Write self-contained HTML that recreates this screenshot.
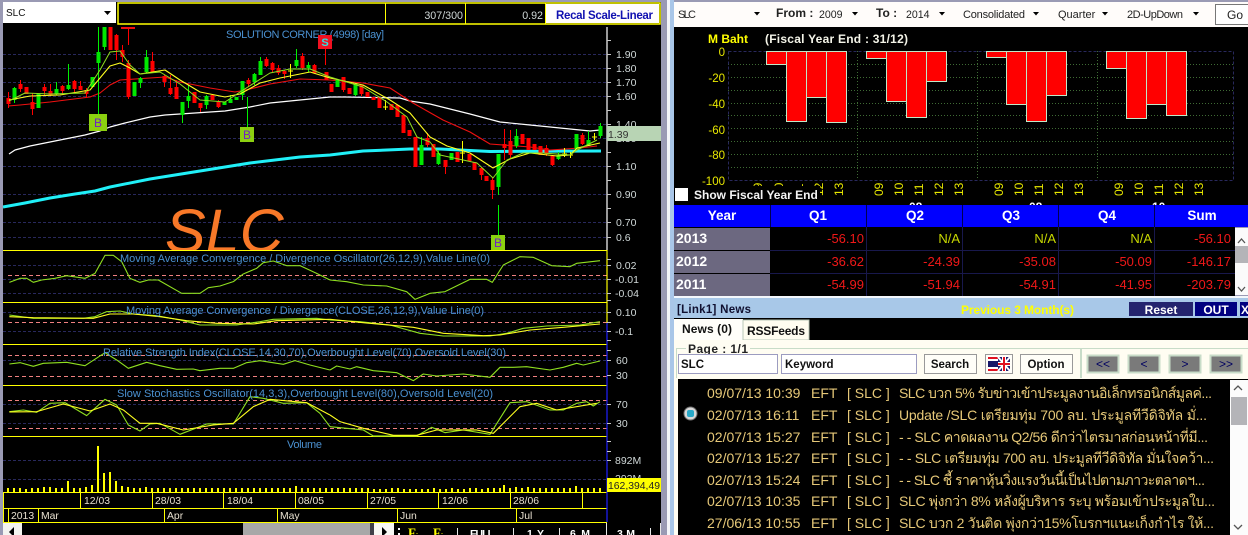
<!DOCTYPE html>
<html><head><meta charset="utf-8"><style>
html,body{margin:0;padding:0;background:#9a9ab4;width:1248px;height:535px;overflow:hidden}
svg{display:block;position:absolute;left:0;top:0}
text{font-family:"Liberation Sans","Noto Sans CJK SC",sans-serif;white-space:pre}
.sc{fill:#d0d8d8;font-size:10.5px}
.t{fill:#4a90d0;font-size:11px}
.d{fill:#e8e0d0;font-size:10.4px}
.ya{fill:#e8e800;font-size:11.5px;text-anchor:end}
.xa{fill:#e8e800;font-size:12px}
.th{fill:#fff;font-size:13.5px;font-weight:bold;text-anchor:middle}
.yr{fill:#fff;font-size:14px;font-weight:bold}
.ft{fill:#fff;font-size:10.500px;font-weight:bold}
.v{fill:#f01818;font-size:13px;text-anchor:end}
.na{fill:#c8d800;font-size:13px;text-anchor:end}
.n{fill:#e6c878;font-size:14px}
.tb{fill:#222;font-size:11px}
.nv{fill:#000060;font-size:12px;text-anchor:middle}
.m{fill:#fff;font-size:13px;font-weight:bold;text-anchor:middle}
</style></head><body>
<svg width="1248" height="535" viewBox="0 0 1248 535" xmlns="http://www.w3.org/2000/svg">
<defs><clipPath id="c1"><rect x="3" y="27" width="604" height="223"/></clipPath>
<clipPath id="c2"><rect x="673" y="183" width="575" height="22"/></clipPath></defs>
<!-- frame -->
<rect width="1248" height="535" fill="#9a9ab4"/>
<rect x="667" y="0" width="3" height="535" fill="#f4f6fa"/>
<rect x="670" y="0" width="4" height="535" fill="#a9c6e8"/>
<rect x="3" y="2" width="658" height="533" fill="#000"/>

<!-- left top bar -->
<rect x="3" y="2" width="113" height="21" fill="#fff"/>
<text x="6" y="16" style="font-size:10px" fill="#111">SLC</text>
<path d="M104 11h7l-3.500 4z" fill="#000"/>
<rect x="118" y="3" width="542" height="21" fill="#000" stroke="#ffff00" stroke-width="1.500"/>
<path d="M385.500 3V24M465.500 3V24M545.500 3V24" stroke="#ffff00"/>
<text x="463" y="19" text-anchor="end" style="font-size:10.700px" fill="#d0d8d8">307/300</text>
<text x="543" y="19" text-anchor="end" style="font-size:10.700px" fill="#d0d8d8">0.92</text>
<rect x="546" y="4" width="113" height="19" fill="#fffdfd"/>
<text x="556" y="19" style="font-size:11.500px;font-weight:bold" fill="#1010b0" textLength="97">Recal Scale-Linear</text>

<!-- main grid -->
<g stroke="#28285c" stroke-dasharray="3 2" shape-rendering="crispEdges">
<path d="M3 54.500H607M3 68.500H607M3 82.500H607M3 96.500H607M3 124.500H607M3 138.500H607M3 166.500H607M3 194.500H607M3 222.500H607M3 237.500H607"/>
<path d="M3 265.500H607M3 279.500H607M3 293.500H607M3 312.500H607M3 331.500H607M3 360.500H607M3 404.500H607M3 423.500H607M3 460.500H607M3 479.500H607"/>
</g>
<!-- SLC watermark -->
<g clip-path="url(#c1)"><text x="165" y="252" style="font-size:61px;font-style:italic" fill="#f87828">SLC</text></g>
<text x="226" y="38" class="t" textLength="158">SOLUTION CORNER (4998) [day]</text>

<!-- MAs -->
<g fill="none" stroke-linejoin="round">
<path d="M9 154L15 150L30 146L50 142L65 139L85 135L100 131L110 127L125 123L150 117L165 115L180 114L210 112L225 111L250 107L270 103L300 100L330 97L345 97L400 98L410 101L430 104L470 114L500 122L530 125L560 128L590 131L600 130" stroke="#fff" stroke-width="1.200"/>
<path d="M3 207L25 203L50 198L75 194L95 191L110 187L150 179L200 171L250 163L300 157L330 155L363 151L410 149L440 149L490 151.500L601 151" stroke="#20f0f8" stroke-width="3"/>
<path d="M8 106L20 105L50 102L90 97L100 93L110 85L120 80L150 78L165 77L180 82L210 88L235 92L250 89L270 84L300 79L330 80L363 83L390 88L413 103L443 120L470 132L490 144L530 147L550 150L580 148L597 146" stroke="#f01010" stroke-width="1.100"/>
</g>
<!-- wicks -->
<path fill="none" stroke="#ff0000" d="M8.500 92V108M20.500 80V92M32.500 93V115M44.500 84V95M50.500 84V96M62.500 85V94M74.500 80V92M80.500 81V90M86.500 88V98M116.500 34V60M122.500 45V62M128.500 28V45M128.500 60V99M152.500 52V72M164.500 75V87M170.500 75V95M176.500 80V99M200.500 103V112M218.500 100V108M248.500 78V87M266.500 57V67M272.500 62V72M278.500 65V75M284.500 70V79M302.500 53V70M314.500 64V73M325.500 49V65M343.500 77V92M361.500 85V96M427.500 133V147M445.500 160V174M481.500 167V180M492.500 178V199M504.500 129V160M510.500 130V158M546.500 145V156M552.500 155V166M582.500 133V145"/>
<path fill="none" stroke="#00f000" d="M14.500 87V103M56.500 82V95M68.500 64V90M98.500 27V114M104.500 27V50M140.500 77V88M146.500 50V73M182.500 102V123M188.500 85V108M206.500 95V109M230.500 95V103M242.500 81V100M247.500 97V127M254.500 73V85M260.500 57V75M296.500 49V68M308.500 62V72M355.500 84V96M421.500 137V165M438.500 150V165M498.500 154V195M498.500 205V235M516.500 129V148M558.500 152V160M588.500 131V146M600.500 123V138"/>
<!-- bodies -->
<path fill="none" stroke="#ff0000" stroke-width="4" d="M8.500 98V104M20.500 84V89M26.500 87V94M32.500 102V109M44.500 87V91M50.500 91V95M62.500 86V91M74.500 81V89M80.500 86V90M86.500 90V94M110.500 27V50M116.500 35V50M122.500 50V57M128.500 63V97M152.500 61V72M164.500 76V82M170.500 88V94M176.500 87V99M194.500 92V103M200.500 103V108M212.500 95V100M218.500 102V107M248.500 80V84M266.500 59V66M272.500 63V70M278.500 68V73M284.500 71V74M302.500 56V68M314.500 65V73M326.500 72V80M331.500 84V92M343.500 77V90M349.500 88V94M361.500 85V94M367.500 92V97M373.500 97V100M379.500 97V108M391.500 104V110M397.500 105V117M403.500 115V133M409.500 130V136M415.500 137V167M427.500 138V145M433.500 144V157M445.500 160V167M457.500 152V162M469.500 154V161M474.500 162V170M481.500 168V175M486.500 176V181M492.500 180V190M504.500 144V148M510.500 141V155M522.500 134V144M528.500 138V150M534.500 144V150M540.500 146V155M546.500 148V154M552.500 156V165M582.500 135V144"/>
<path fill="none" stroke="#00e800" stroke-width="4" d="M14.500 88V100M38.500 94V108M56.500 89V94M68.500 85V89M92.500 77V87M98.500 52V63M104.500 27V47M134.500 82V96M140.500 78V83M146.500 57V72M182.500 102V115M188.500 96V101M206.500 96V105M224.500 102V105M230.500 99V103M236.500 97V100M242.500 81V95M254.500 74V82M260.500 61V75M296.500 60V66M308.500 65V68M337.500 80V87M355.500 84V95M421.500 145V165M438.500 153V164M451.500 153V160M498.500 154V187M516.500 136V146M558.500 155V159M576.500 134V149M588.500 140V146M600.500 126V136"/>
<path fill="none" stroke="#ffff00" d="M290.500 64V78M288 71H293M385.500 100V110M383 107H388M462.500 141V163M460 153H465M564.500 148V157M562 154H567M570.500 152V158M568 155H573M594.500 133V140M592 137H597"/>
<path d="M121 28H135" stroke="#f01010" stroke-width="2"/>
<g fill="none" stroke-linejoin="round">
<path d="M9 100L30 96L60 95L90 90L100 78L110 66L120 63L130 68L140 74L165 70L180 80L200 92L225 97L240 94L260 83L280 78L310 72L330 78L363 85L390 100L410 113L430 137L447 146L470 153L493 168L510 159L530 153L557 156L570 155L577 148L600 143" stroke="#ffff20" stroke-width="1.100"/>
<path d="M9 101L25 93L50 94L85 93L100 70L110 52L120 51L130 65L140 74L160 72L180 84L200 100L225 102L240 92L270 73L290 69L310 69L330 77L363 87L387 102L407 117L417 137L430 142L440 155L463 160L477 163L493 178L507 160L523 153L543 153L570 155L577 150L597 140" stroke="#90e020" stroke-width="1"/>
</g>
<!-- markers -->
<rect x="89" y="114" width="18" height="17" fill="#8cd010"/><text x="98" y="127" text-anchor="middle" style="font-size:12px" fill="#7020c8">B</text>
<rect x="240" y="127" width="14" height="15" fill="#8cd010"/><text x="247" y="139" text-anchor="middle" style="font-size:12px" fill="#7020c8">B</text>
<rect x="491" y="235" width="14" height="15" fill="#8cd010"/><text x="498" y="247" text-anchor="middle" style="font-size:12px" fill="#7020c8">B</text>
<rect x="318" y="35" width="14" height="14" fill="#f01020"/><text x="325" y="46" text-anchor="middle" style="font-size:11px;font-weight:bold" fill="#30e0e0">S</text>

<!-- panel separators -->
<path d="M3 250.500H607M3 302.500H607M3 344.500H607M3 385.500H607M3 436.500H607" stroke="#ffff00" shape-rendering="crispEdges"/>
<g stroke="#f08080" stroke-dasharray="4 3" shape-rendering="crispEdges">
<path d="M8 275.500H607M8 322.500H607M8 355.500H607M8 376.500H607M8 400.500H607M8 428.500H607"/>
</g>
<!-- oscillator lines -->
<g transform="translate(0 250) scale(.3333)" fill="none" stroke-width="3.300" stroke-linejoin="round">
<path stroke="#90e020" d="M28 97L60 85L80 85L100 97L125 90L165 85L200 77L255 85L285 70L315 16L340 16L365 35L390 85L420 97L445 90L475 90L545 130L600 130L625 113L660 108L700 95L730 72L770 55L790 38L820 33L860 47L900 47L950 70L990 90"/>
<path stroke="#90e020" d="M28 195L100 205L250 205L285 200L320 185L360 183L400 192L470 197L540 210L600 225L710 225L780 215L820 208L950 205L990 210"/>
<path stroke="#ffff20" d="M28 200L100 203L280 205L330 192L400 192L480 200L560 212L650 220L760 222L830 212L990 208"/>
<path stroke="#90e020" d="M28 342L60 338L100 349L130 340L200 337L255 347L315 308L350 330L385 355L440 337L480 347L530 358L580 357L600 362L660 355L700 355L740 338L780 332L850 343L885 332L930 345L990 360"/>
<path stroke="#90e020" d="M28 485L70 480L110 487L150 460L195 458L260 497L315 448L350 465L385 525L420 543L450 522L480 520L540 553L620 522L700 522L750 440L790 445L850 460L920 458L960 490L990 530"/>
<path stroke="#ffff20" d="M28 486L110 485L190 462L270 483L330 462L370 480L420 520L470 520L550 540L640 525L700 520L760 470L810 448L920 458L990 495"/>
</g>
<g transform="translate(330 250) scale(.3333)" fill="none" stroke-width="3.300" stroke-linejoin="round">
<path stroke="#90e020" d="M0 90L50 95L100 105L170 108L230 125L255 148L300 130L345 125L420 88L470 88L487 97L520 45L570 20L610 22L665 47L720 50L740 40L810 32"/>
<path stroke="#90e020" d="M0 210L90 215L180 225L270 250L340 258L390 258L480 258L530 250L580 235L650 228L750 225L810 215"/>
<path stroke="#ffff20" d="M0 208L100 218L250 232L340 250L460 257L510 255L600 240L700 232L810 222"/>
<path stroke="#90e020" d="M0 360L20 348L60 357L80 350L130 362L200 368L250 392L280 372L320 378L400 372L480 382L510 352L550 352L590 350L660 360L700 352L740 340L760 345L810 333"/>
<path stroke="#90e020" d="M0 530L100 540L130 558L190 558L260 558L305 532L345 548L400 540L480 553L540 458L590 455L660 480L700 480L740 460L770 455L790 468L810 455"/>
<path stroke="#ffff20" d="M0 495L30 515L100 535L190 556L260 556L320 540L440 540L490 550L570 470L620 460L680 480L800 460"/>
</g>
<text x="120" y="262" class="t" textLength="370">Moving Average Convergence / Divergence Oscillator(26,12,9),Value Line(0)</text>
<text x="126" y="314" class="t" textLength="358">Moving Average Convergence / Divergence(CLOSE,26,12,9),Value Line(0)</text>
<text x="103" y="356" class="t" textLength="403">Relative Strength Index(CLOSE,14,30,70),Overbought Level(70),Oversold Level(30)</text>
<text x="117" y="397" class="t" textLength="376">Slow Stochastics Oscillator(14,3,3),Overbought Level(80),Oversold Level(20)</text>
<text x="287" y="448" class="t" textLength="35">Volume</text>

<!-- volume -->
<path stroke="#ffff00" stroke-width="2" fill="none" shape-rendering="crispEdges" d="M8 488V492M14 488V492M20 488V492M26 489V492M32 488V492M38 488V492M44 487V492M50 487V492M56 488V492M62 488V492M68 481V492M74 488V492M80 488V492M86 487V492M92 485V492M98 446V492M104 473V492M110 472V492M116 481V492M122 486V492M128 487V492M134 488V492M140 488V492M146 487V492M152 488V492M158 488V492M164 488V492M170 488V492M176 488V492M182 488V492M188 488V492M194 488V492M200 488V492M206 488V492M212 488V492M218 488V492M224 488V492M230 488V492M236 488V492M242 488V492M248 488V492M254 488V492M260 488V492M266 488V492M272 488V492M278 488V492M284 488V492M290 488V492M296 486V492M302 488V492M308 488V492M314 488V492M320 488V492M326 488V492M332 488V492M338 488V492M344 488V492M350 488V492M356 488V492M362 488V492M368 488V492M374 489V492M380 489V492M386 489V492M392 488V492M398 488V492M404 489V492M410 489V492M416 489V492M422 489V492M428 489V492M434 488V492M440 489V492M446 489V492M452 488V492M458 489V492M464 489V492M470 488V492M476 488V492M482 489V492M488 488V492M494 488V492M500 488V492M504 485V492M510 488V492M516 487V492M522 488V492M528 487V492M534 488V492M540 488V492M546 488V492M552 488V492M558 488V492M564 488V492M570 488V492M576 486V492M582 488V492M588 488V492M594 488V492M600 488V492"/>

<!-- date rows -->
<path d="M3 492.500H607M3 508.500H607M3 522.500H607" stroke="#ffff00" shape-rendering="crispEdges"/>
<path d="M80.500 492V508M152.500 492V508M223.500 492V508M295.500 492V508M367.500 492V508M438.500 492V508M510.500 492V508M582.500 492V508M8.500 508V522M38.500 508V522M164.500 508V522M277.500 508V522M397.500 508V522M516.500 508V522M3.500 492V522" stroke="#ffff00" shape-rendering="crispEdges"/>
<text x="84" y="504" class="d">12/03</text><text x="155" y="504" class="d">28/03</text><text x="227" y="504" class="d">18/04</text><text x="298" y="504" class="d">08/05</text><text x="370" y="504" class="d">27/05</text><text x="442" y="504" class="d">12/06</text><text x="513" y="504" class="d">28/06</text>
<text x="11" y="519" class="d">2013</text><text x="41" y="519" class="d">Mar</text><text x="167" y="519" class="d">Apr</text><text x="280" y="519" class="d">May</text><text x="400" y="519" class="d">Jun</text><text x="519" y="519" class="d">Jul</text>

<!-- scale -->
<path d="M607 27V250" stroke="#fff" stroke-width="1.200"/><path d="M607 250V323" stroke="#ffff00" stroke-width="1.200"/><path d="M607 323V522" stroke="#2020ff" stroke-width="1.200"/>
<path d="M607 40.500H611M607 54.500H611M607 68.500H611M607 82.500H611M607 96.500H611M607 110.500H611M607 124.500H611M607 138.500H611M607 152.500H611M607 166.500H611M607 180.500H611M607 194.500H611M607 208.500H611M607 222.500H611M607 237.500H611M607 259.500H611M607 265.500H611M607 279.500H611M607 293.500H611M607 300.500H611M607 312.500H611M607 322.500H611M607 331.500H611M607 340.500H611M607 350.500H611M607 360.500H611M607 375.500H611M607 404.500H611M607 423.500H611M607 441.500H611M607 451.500H611M607 460.500H611" stroke="#c8c8c8" shape-rendering="crispEdges"/>
<text class="sc" x="616" y="58">1.90</text><text class="sc" x="616" y="72">1.80</text><text class="sc" x="616" y="86">1.70</text><text class="sc" x="616" y="100">1.60</text><text class="sc" x="616" y="128">1.40</text><text class="sc" x="616" y="142">1.30</text><text class="sc" x="616" y="170">1.10</text><text class="sc" x="616" y="198">0.90</text><text class="sc" x="616" y="226">0.70</text><text class="sc" x="616" y="241">0.6</text>
<text class="sc" x="616" y="269">0.02</text><text class="sc" x="615" y="283">-0.01</text><text class="sc" x="615" y="297">-0.04</text><text class="sc" x="616" y="316">0.10</text><text class="sc" x="615" y="335">-0.1</text><text class="sc" x="616" y="364">60</text><text class="sc" x="616" y="379">30</text><text class="sc" x="616" y="408">70</text><text class="sc" x="616" y="427">30</text><text class="sc" x="615" y="464">892M</text><text class="sc" x="615" y="482">292M</text>
<rect x="607" y="126" width="54" height="15" fill="#b8d4b4"/><text x="608" y="138" style="font-size:10.500px" fill="#333">1.39</text>
<rect x="607" y="478" width="54" height="14" fill="#ffff00"/><text x="608" y="489" style="font-size:10.400px" fill="#222">162,394,49</text>

<!-- bottom scrollbar -->
<rect x="3" y="523" width="19" height="12" fill="#f4f4f0"/><path d="M14 527L9 532L14 537z" fill="#000"/>
<rect x="243" y="523" width="127" height="12" fill="#a8a8a8"/>
<rect x="370" y="523" width="4" height="12" fill="#404048"/>
<rect x="374" y="523" width="20" height="12" fill="#f8f8f4"/><path d="M382 527L387 532L382 537z" fill="#000"/>
<path d="M399 528V530M399 533V535" stroke="#fff" stroke-width="2"/>
<text x="408" y="537" style="font:bold 13px 'Liberation Serif',serif" fill="#ffff00">F</text><text x="416" y="535" style="font-size:6px" fill="#ffff00">-</text>
<text x="433" y="537" style="font:bold 13px 'Liberation Serif',serif" fill="#ffff00">F</text><text x="441" y="535" style="font-size:6px" fill="#ffff00">-</text>
<path d="M457.500 528V535M513.500 528V535M559.500 528V535M606.500 523V535M650.500 528V535M660.500 523V535" stroke="#e8e8e8" shape-rendering="crispEdges"/>
<text x="470" y="537" class="ft" textLength="24">FULL</text><text x="527" y="537" class="ft" textLength="17">1 Y</text><text x="570" y="537" class="ft" textLength="20">6 M</text><text x="617" y="537" class="ft" textLength="18">3 M</text>

<!-- RIGHT: toolbar -->
<rect x="674" y="2" width="574" height="25" fill="#fffcfa"/>
<text x="678" y="18" class="tb" textLength="18">SLC</text><text x="776" y="17" class="tb" style="font-weight:bold;font-size:12px">From :</text><text x="819" y="18" class="tb" style="font-size:10.600px">2009</text><text x="876" y="17" class="tb" style="font-weight:bold;font-size:12px">To :</text><text x="906" y="18" class="tb" style="font-size:10.600px">2014</text><text x="963" y="18" class="tb" textLength="62">Consolidated</text><text x="1058" y="18" class="tb">Quarter</text><text x="1127" y="18" class="tb" textLength="56">2D-UpDown</text>
<path d="M754 12h6l-3 3.500zM852 12h6l-3 3.500zM939 12h6l-3 3.500zM1033 12h6l-3 3.500zM1102 12h6l-3 3.500zM1193 12h6l-3 3.500z" fill="#000"/>
<rect x="1215.500" y="4.500" width="40" height="20" fill="#fff" stroke="#777"/><text x="1227" y="19" class="tb" style="font-size:12px">Go</text>

<!-- bar chart -->
<rect x="674" y="27" width="574" height="178" fill="#000"/>
<text x="708" y="43" style="font-size:12px;font-weight:bold" fill="#ffff00">M Baht</text>
<text x="765" y="43" style="font-size:12px;font-weight:bold" fill="#f4f4e8" textLength="143">(Fiscal Year End : 31/12)</text>
<g stroke="#3e6a34" stroke-dasharray="1 2" shape-rendering="crispEdges">
<path d="M728 64.500H1233M728 77.500H1233M728 90.500H1233M728 103.500H1233M728 115.500H1233M728 128.500H1233M728 141.500H1233M728 154.500H1233M728 167.500H1233M857.500 51V180M977.500 51V180M1097.500 51V180"/></g>
<rect x="728.500" y="51.500" width="505" height="129" fill="none" stroke="#28285c" stroke-dasharray="3 2"/>
<g fill="#ff0000" stroke="#c0e8c8" stroke-width="1" shape-rendering="crispEdges">
<rect x="766.500" y="51.500" width="20" height="13"/><rect x="786.500" y="51.500" width="20" height="70"/><rect x="806.500" y="51.500" width="20" height="46"/><rect x="826.500" y="51.500" width="20" height="71"/>
<rect x="866.500" y="51.500" width="20" height="7"/><rect x="886.500" y="51.500" width="20" height="50"/><rect x="906.500" y="51.500" width="20" height="66"/><rect x="926.500" y="51.500" width="20" height="30"/>
<rect x="986.500" y="51.500" width="20" height="6"/><rect x="1006.500" y="51.500" width="20" height="53"/><rect x="1026.500" y="51.500" width="20" height="70"/><rect x="1046.500" y="51.500" width="20" height="44"/>
<rect x="1106.500" y="51.500" width="20" height="17"/><rect x="1126.500" y="51.500" width="20" height="67"/><rect x="1146.500" y="51.500" width="20" height="53"/><rect x="1166.500" y="51.500" width="20" height="64"/>
</g>
<text class="ya" x="725" y="56">0</text><text class="ya" x="725" y="82">-20</text><text class="ya" x="725" y="108">-40</text><text class="ya" x="725" y="134">-60</text><text class="ya" x="725" y="159">-80</text><text class="ya" x="725" y="185">-100</text>
<g clip-path="url(#c2)">
<text class="xa" transform="translate(762 196) rotate(-90)">09</text><text class="xa" transform="translate(783 196) rotate(-90)">10</text><text class="xa" transform="translate(803 196) rotate(-90)">11</text><text class="xa" transform="translate(823 196) rotate(-90)">12</text><text class="xa" transform="translate(843 196) rotate(-90)">13</text>
<text class="xa" transform="translate(883 196) rotate(-90)">09</text><text class="xa" transform="translate(903 196) rotate(-90)">10</text><text class="xa" transform="translate(923 196) rotate(-90)">11</text><text class="xa" transform="translate(943 196) rotate(-90)">12</text><text class="xa" transform="translate(963 196) rotate(-90)">13</text>
<text class="xa" transform="translate(1003 196) rotate(-90)">09</text><text class="xa" transform="translate(1023 196) rotate(-90)">10</text><text class="xa" transform="translate(1043 196) rotate(-90)">11</text><text class="xa" transform="translate(1063 196) rotate(-90)">12</text><text class="xa" transform="translate(1083 196) rotate(-90)">13</text>
<text class="xa" transform="translate(1123 196) rotate(-90)">09</text><text class="xa" transform="translate(1143 196) rotate(-90)">10</text><text class="xa" transform="translate(1163 196) rotate(-90)">11</text><text class="xa" transform="translate(1183 196) rotate(-90)">12</text><text class="xa" transform="translate(1203 196) rotate(-90)">13</text>
</g>
<rect x="674" y="186" width="146" height="19" fill="#000"/>
<rect x="675" y="188" width="13" height="13" fill="#fff"/>
<text x="694" y="199" style="font-size:12px;font-weight:bold" fill="#f4f4f4">Show Fiscal Year End</text>
<text x="909" y="211" style="font-size:12px;font-weight:bold" fill="#fff">08</text><text x="1029" y="211" style="font-size:12px;font-weight:bold" fill="#fff">08</text><text x="1152" y="211" style="font-size:12px;font-weight:bold" fill="#fff">10</text>

<!-- table -->
<rect x="674" y="205" width="574" height="22" fill="#0000ff"/>
<path d="M770.500 205V227M866.500 205V227M962.500 205V227M1058.500 205V227M1154.500 205V227" stroke="#000050"/>
<text class="th" x="722" y="220">Year</text><text class="th" x="818" y="220">Q1</text><text class="th" x="915" y="220">Q2</text><text class="th" x="1011" y="220">Q3</text><text class="th" x="1107" y="220">Q4</text><text class="th" x="1202" y="220">Sum</text>
<rect x="674" y="227" width="561" height="69" fill="#000"/>
<rect x="674" y="228" width="96" height="22" fill="#6c6880"/><rect x="674" y="251" width="96" height="22" fill="#6c6880"/><rect x="674" y="274" width="96" height="22" fill="#6c6880"/>
<path d="M770 250.500H1235M770 273.500H1235M866.500 227V296M962.500 227V296M1058.500 227V296M1154.500 227V296" stroke="#18184c" shape-rendering="crispEdges"/>
<text class="yr" x="676" y="243">2013</text><text class="yr" x="676" y="266">2012</text><text class="yr" x="676" y="289">2011</text>
<text class="v" x="864" y="243">-56.10</text><text class="na" x="960" y="243">N/A</text><text class="na" x="1056" y="243">N/A</text><text class="na" x="1152" y="243">N/A</text><text class="v" x="1231" y="243">-56.10</text>
<text class="v" x="864" y="266">-36.62</text><text class="v" x="960" y="266">-24.39</text><text class="v" x="1056" y="266">-35.08</text><text class="v" x="1152" y="266">-50.09</text><text class="v" x="1231" y="266">-146.17</text>
<text class="v" x="864" y="289">-54.99</text><text class="v" x="960" y="289">-51.94</text><text class="v" x="1056" y="289">-54.91</text><text class="v" x="1152" y="289">-41.95</text><text class="v" x="1231" y="289">-203.79</text>
<rect x="1235" y="228" width="13" height="67" fill="#fbfbfb"/><rect x="1235" y="246" width="13" height="17" fill="#b4b4b8"/>
<path d="M1238 243L1241.500 239L1245 243M1238 287L1241.500 291L1245 287" fill="none" stroke="#555" stroke-width="1.300"/>

<!-- link bar -->
<rect x="674" y="296" width="574" height="2" fill="#f4f8fc"/>
<rect x="674" y="298" width="574" height="20" fill="#a8c8e8"/>
<text x="677" y="313" style="font-size:11.500px;font-weight:bold" fill="#101030" textLength="74">[Link1] News</text>
<text x="961" y="314" style="font-size:12px;font-weight:bold" fill="#ffff00" textLength="113">Previous 3 Month(s)</text>
<rect x="1129" y="302" width="64" height="14" fill="#24246e"/><text class="m" x="1161" y="314" style="font-size:12px">Reset</text>
<rect x="1195" y="302" width="42" height="14" fill="#000080"/><text class="m" x="1216" y="314" style="font-size:12px">OUT</text>
<rect x="1240" y="302" width="8" height="14" fill="#000080"/><text x="1241" y="314" style="font-size:12px;font-weight:bold" fill="#fff">X</text>

<!-- tabs -->
<rect x="674" y="318" width="574" height="22" fill="#000"/>
<rect x="674" y="319" width="69" height="22" fill="#fffefa"/><text x="682" y="333" style="font-size:12px;font-weight:bold" fill="#111" textLength="50">News (0)</text>
<rect x="743" y="320" width="66" height="20" fill="#fffdf0" stroke="#b8c8b8"/><text x="747" y="335" style="font-size:12px;font-weight:bold" fill="#111" textLength="58">RSSFeeds</text>

<!-- filter row -->
<rect x="674" y="340" width="574" height="39" fill="#fffdf2"/>
<rect x="674" y="379" width="4" height="156" fill="#fffdf2"/>
<path d="M676.500 378V348.500H686M750 348.500H1080.500V378M1081.500 378V348.500H1248" fill="none" stroke="#c8dcc8"/>
<text x="688" y="353" style="font-size:12px;font-weight:bold" fill="#222" textLength="60">Page : 1/1</text>
<rect x="678.500" y="354.500" width="99" height="19" fill="#fff" stroke="#9c9cc0"/><text x="681" y="368" style="font-size:11.500px;font-weight:bold" fill="#111">SLC</text>
<rect x="781.500" y="354.500" width="135" height="19" fill="#fff" stroke="#9c9cc0"/><text x="785" y="368" style="font-size:11.500px;font-weight:bold" fill="#111">Keyword</text>
<rect x="924.500" y="354.500" width="52" height="19" fill="#fffef8" stroke="#999"/><text x="950" y="368" text-anchor="middle" style="font-size:11.500px;font-weight:bold" fill="#111">Search</text>
<rect x="985.500" y="354.500" width="27" height="19" fill="#fffef8" stroke="#999"/>
<g shape-rendering="crispEdges"><rect x="988" y="357" width="10" height="14" fill="#fff"/><rect x="988" y="357" width="10" height="2" fill="#e01020"/><rect x="988" y="369" width="10" height="2" fill="#e01020"/><rect x="988" y="361" width="10" height="6" fill="#181868"/><rect x="998" y="357" width="12" height="14" fill="#202070"/></g>
<path d="M998 357L1010 371M1010 357L998 371" stroke="#fff" stroke-width="2"/><path d="M1004 357V371M998 364H1010" stroke="#fff" stroke-width="4"/><path d="M1004 357V371M998 364H1010" stroke="#e01020" stroke-width="2"/>
<rect x="1020.500" y="354.500" width="52" height="19" fill="#fffef8" stroke="#999"/><text x="1046" y="368" text-anchor="middle" style="font-size:11.500px;font-weight:bold" fill="#111">Option</text>
<g fill="#7a7a7a" stroke="#c8dcc8" stroke-width="2"><rect x="1087.500" y="355.500" width="31" height="17"/><rect x="1128.500" y="355.500" width="31" height="17"/><rect x="1169.500" y="355.500" width="31" height="17"/><rect x="1210.500" y="355.500" width="31" height="17"/></g>
<text class="nv" x="1103" y="368">&lt;&lt;</text><text class="nv" x="1144" y="368">&lt;</text><text class="nv" x="1185" y="368">&gt;</text><text class="nv" x="1226" y="368">&gt;&gt;</text>

<!-- news -->
<rect x="678" y="379" width="570" height="156" fill="#000"/>
<rect x="1230" y="380" width="18" height="155" fill="#fcfcfc"/>
<rect x="1231" y="397" width="16" height="28" fill="#b4b4b8"/>
<path d="M1234 390L1238 386L1242 390M1234 525L1238 529L1242 525" fill="none" stroke="#555" stroke-width="1.300"/>
<circle cx="690.500" cy="413.500" r="6.500" fill="#d8d8d8" stroke="#707070"/><rect x="687" y="410" width="7" height="7" rx="2" fill="#28a8c8"/>
<text class="n" x="707" y="398">09/07/13 10:39</text><text class="n" x="811" y="398">EFT</text><text class="n" x="847" y="398">[ SLC ]</text><text class="n" x="899" y="398" textLength="313">SLC บวก 5% รับข่าวเข้าประมูลงานอิเล็กทรอนิกส์มูลค่...</text>
<text class="n" x="707" y="420">02/07/13 16:11</text><text class="n" x="811" y="420">EFT</text><text class="n" x="847" y="420">[ SLC ]</text><text class="n" x="899" y="420" textLength="308">Update /SLC เตรียมทุ่ม 700 ลบ. ประมูลทีวีดิจิทัล มั่...</text>
<text class="n" x="707" y="442">02/07/13 15:27</text><text class="n" x="811" y="442">EFT</text><text class="n" x="847" y="442">[ SLC ]</text><text class="n" x="899" y="442" textLength="309">- - SLC คาดผลงาน Q2/56 ดีกว่าไตรมาสก่อนหน้าที่มี...</text>
<text class="n" x="707" y="463">02/07/13 15:27</text><text class="n" x="811" y="463">EFT</text><text class="n" x="847" y="463">[ SLC ]</text><text class="n" x="899" y="463" textLength="315">- - SLC เตรียมทุ่ม 700 ลบ. ประมูลทีวีดิจิทัล มั่นใจคว้า...</text>
<text class="n" x="707" y="485">02/07/13 15:24</text><text class="n" x="811" y="485">EFT</text><text class="n" x="847" y="485">[ SLC ]</text><text class="n" x="899" y="485" textLength="306">- - SLC ชี้ ราคาหุ้นวิ่งแรงวันนี้เป็นไปตามภาวะตลาดฯ...</text>
<text class="n" x="707" y="506">02/07/13 10:35</text><text class="n" x="811" y="506">EFT</text><text class="n" x="847" y="506">[ SLC ]</text><text class="n" x="899" y="506" textLength="316">SLC พุ่งกว่า 8% หลังผู้บริหาร ระบุ พร้อมเข้าประมูลใบ...</text>
<text class="n" x="707" y="528">27/06/13 10:55</text><text class="n" x="811" y="528">EFT</text><text class="n" x="847" y="528">[ SLC ]</text><text class="n" x="899" y="528" textLength="315">SLC บวก 2 วันติด พุ่งกว่า15%โบรกฯแนะเก็งกำไร ให้...</text>
</svg>
</body></html>
